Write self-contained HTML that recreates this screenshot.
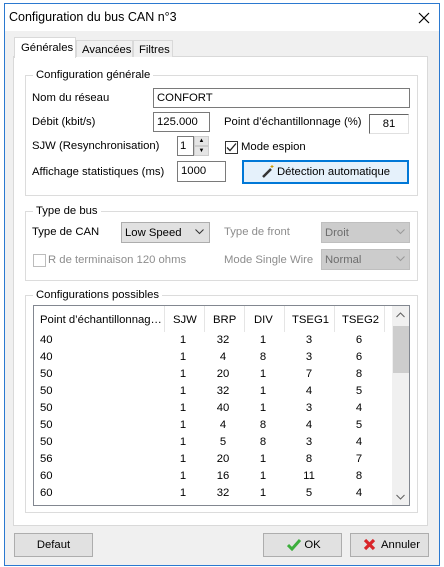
<!DOCTYPE html><html><head><meta charset="utf-8"><style>
*{box-sizing:border-box;margin:0;padding:0}
body{width:444px;height:567px;background:#fff;font-family:"Liberation Sans",sans-serif;font-size:11.3px;line-height:17px;color:#000;position:relative;overflow:hidden}
.a{position:absolute;white-space:nowrap}
.win{position:absolute;left:4px;top:3px;width:436px;height:563px;border:1px solid #2b79d0;background:#f0f0f0}
.tb{position:absolute;left:0;top:0;width:434px;height:27px;background:#fff}
.grp{position:absolute;border:1px solid #dcdcdc}
.lg{position:absolute;background:#fff;padding:0 3px;top:-8px;left:7px;line-height:15px}
.in{position:absolute;border:1px solid #7a7a7a;background:#fff;padding:2px 3px;line-height:15px}
.btn{position:absolute;border:1px solid #adadad;background:#e1e1e1;text-align:center;line-height:23px}
.sel{position:absolute;border:1px solid #adadad;background:#e1e1e1;padding-left:3px;line-height:20px}
.dis{background:#ccc;border-color:#bfbfbf;color:#6d6d6d}
.g{color:#8d8d8d}
.row{position:absolute;left:0;width:360px;height:17px;line-height:17px}
.row span{position:absolute;text-align:center;width:30px}
.row span:first-child{left:6px!important;text-align:left}
</style></head><body>
<div class="win">
<div class="tb"><div class="a" style="left:4px;top:5px;font-size:12.5px">Configuration du bus CAN n°3</div>
<svg class="a" style="left:413px;top:8px" width="12" height="12"><path d="M1 1L11 11M11 1L1 11" stroke="#000" stroke-width="1.2"/></svg></div>
</div>
<div class="a" style="left:13px;top:56px;width:415px;height:470px;background:#fff;border:1px solid #d9d9d9"></div>
<div class="a" style="left:14px;top:37px;width:62px;height:21px;background:#fff;border:1px solid #d9d9d9;border-bottom:none;padding:2px 0 0 6px">Générales</div>
<div class="a" style="left:76px;top:40px;width:57px;height:17px;background:#f0f0f0;border:1px solid #d9d9d9;border-bottom:none;padding:1px 0 0 5px">Avancées</div>
<div class="a" style="left:133px;top:40px;width:40px;height:17px;background:#f0f0f0;border:1px solid #d9d9d9;border-bottom:none;padding:1px 0 0 5px">Filtres</div>
<div class="grp" style="left:25px;top:75px;width:393px;height:121px"><div class="lg">Configuration générale</div></div>
<div class="a" style="left:32px;top:90px">Nom du réseau</div>
<div class="in" style="left:153px;top:88px;width:257px;height:20px">CONFORT</div>
<div class="a" style="left:32px;top:114px">Débit (kbit/s)</div>
<div class="in" style="left:153px;top:112px;width:57px;height:20px">125.000</div>
<div class="a" style="left:224px;top:114px">Point d’échantillonnage (%)</div>
<div class="in" style="left:369px;top:114px;width:40px;height:20px;border-color:#666 #e0e0e0 #e0e0e0 #666;text-align:center">81</div>
<div class="a" style="left:32px;top:138px">SJW (Resynchronisation)</div>
<div class="in" style="left:177px;top:136px;width:17px;height:20px;padding-left:2px">1</div>
<div class="a" style="left:194px;top:136px;width:15px;height:10px;background:#e5e5e5;border:1px solid #ccc;font-size:6px;text-align:center;line-height:8px">▲</div>
<div class="a" style="left:194px;top:146px;width:15px;height:10px;background:#e5e5e5;border:1px solid #ccc;font-size:6px;text-align:center;line-height:8px">▼</div>
<div class="a" style="left:225px;top:141px;width:13px;height:13px;border:1px solid #333;background:#fff"></div>
<svg class="a" style="left:226px;top:142px" width="11" height="11"><path d="M1 5.5L4 8.5L10 1.5" stroke="#222" stroke-width="1.3" fill="none"/></svg>
<div class="a" style="left:241px;top:139px">Mode espion</div>
<div class="a" style="left:32px;top:164px">Affichage statistiques (ms)</div>
<div class="in" style="left:177px;top:161px;width:49px;height:21px">1000</div>
<div class="btn" style="left:242px;top:160px;width:167px;height:24px;border:2px solid #0078d7;background:#e5f1fb;line-height:21px;padding-left:16px">Détection automatique</div>
<svg class="a" style="left:261px;top:164px" width="14" height="14"><path d="M2 13L10 5" stroke="#333" stroke-width="2.5"/><path d="M11 1v3M9.5 2.5h3" stroke="#c90" stroke-width="1"/></svg>
<div class="grp" style="left:25px;top:211px;width:393px;height:70px"><div class="lg">Type de bus</div></div>
<div class="a" style="left:32px;top:224px">Type de CAN</div>
<div class="sel" style="left:121px;top:222px;width:89px;height:21px">Low Speed</div>
<svg class="a" style="left:195px;top:229px" width="9" height="6"><path d="M0.5 0.5L4.5 4.5L8.5 0.5" stroke="#333" fill="none"/></svg>
<div class="a g" style="left:224px;top:224px">Type de front</div>
<div class="sel dis" style="left:321px;top:222px;width:89px;height:21px">Droit</div>
<svg class="a" style="left:396px;top:229px" width="9" height="6"><path d="M0.5 0.5L4.5 4.5L8.5 0.5" stroke="#999" fill="none"/></svg>
<div class="a" style="left:33px;top:254px;width:13px;height:13px;border:1px solid #bcbcbc;background:#fff"></div>
<div class="a g" style="left:48px;top:252px">R de terminaison 120 ohms</div>
<div class="a g" style="left:224px;top:252px">Mode Single Wire</div>
<div class="sel dis" style="left:321px;top:249px;width:89px;height:21px">Normal</div>
<svg class="a" style="left:396px;top:256px" width="9" height="6"><path d="M0.5 0.5L4.5 4.5L8.5 0.5" stroke="#999" fill="none"/></svg>
<div class="grp" style="left:25px;top:295px;width:393px;height:218px"><div class="lg">Configurations possibles</div></div>
<div class="a" style="left:33px;top:305px;width:377px;height:201px;border:1px solid #828790;background:#fff;overflow:hidden">
<div class="a" style="left:6px;top:6px">Point d’échantillonnag…</div>
<div class="a" style="left:130px;top:0;width:1px;height:26px;background:#e5e5e5"></div>
<div class="a" style="left:139px;top:6px">SJW</div>
<div class="a" style="left:170px;top:0;width:1px;height:26px;background:#e5e5e5"></div>
<div class="a" style="left:179px;top:6px">BRP</div>
<div class="a" style="left:210px;top:0;width:1px;height:26px;background:#e5e5e5"></div>
<div class="a" style="left:220px;top:6px">DIV</div>
<div class="a" style="left:250px;top:0;width:1px;height:26px;background:#e5e5e5"></div>
<div class="a" style="left:258px;top:6px">TSEG1</div>
<div class="a" style="left:300px;top:0;width:1px;height:26px;background:#e5e5e5"></div>
<div class="a" style="left:308px;top:6px">TSEG2</div>
<div class="a" style="left:350px;top:0;width:1px;height:26px;background:#e5e5e5"></div>
<div class="a" style="left:358px;top:0;width:18px;height:199px;background:#f0f0f0"></div>
<div class="a" style="left:359px;top:20px;width:16px;height:47px;background:#cdcdcd"></div>
<svg class="a" style="left:362px;top:6px" width="9" height="6"><path d="M0.5 5L4.5 1L8.5 5" stroke="#606060" fill="none"/></svg>
<svg class="a" style="left:362px;top:188px" width="9" height="6"><path d="M0.5 1L4.5 5L8.5 1" stroke="#606060" fill="none"/></svg>
<div class="row" style="top:26px"><span>40</span><span style="left:134px">1</span><span style="left:174px">32</span><span style="left:214px">1</span><span style="left:260px">3</span><span style="left:310px">6</span></div>
<div class="row" style="top:43px"><span>40</span><span style="left:134px">1</span><span style="left:174px">4</span><span style="left:214px">8</span><span style="left:260px">3</span><span style="left:310px">6</span></div>
<div class="row" style="top:60px"><span>50</span><span style="left:134px">1</span><span style="left:174px">20</span><span style="left:214px">1</span><span style="left:260px">7</span><span style="left:310px">8</span></div>
<div class="row" style="top:77px"><span>50</span><span style="left:134px">1</span><span style="left:174px">32</span><span style="left:214px">1</span><span style="left:260px">4</span><span style="left:310px">5</span></div>
<div class="row" style="top:94px"><span>50</span><span style="left:134px">1</span><span style="left:174px">40</span><span style="left:214px">1</span><span style="left:260px">3</span><span style="left:310px">4</span></div>
<div class="row" style="top:111px"><span>50</span><span style="left:134px">1</span><span style="left:174px">4</span><span style="left:214px">8</span><span style="left:260px">4</span><span style="left:310px">5</span></div>
<div class="row" style="top:128px"><span>50</span><span style="left:134px">1</span><span style="left:174px">5</span><span style="left:214px">8</span><span style="left:260px">3</span><span style="left:310px">4</span></div>
<div class="row" style="top:145px"><span>56</span><span style="left:134px">1</span><span style="left:174px">20</span><span style="left:214px">1</span><span style="left:260px">8</span><span style="left:310px">7</span></div>
<div class="row" style="top:162px"><span>60</span><span style="left:134px">1</span><span style="left:174px">16</span><span style="left:214px">1</span><span style="left:260px">11</span><span style="left:310px">8</span></div>
<div class="row" style="top:179px"><span>60</span><span style="left:134px">1</span><span style="left:174px">32</span><span style="left:214px">1</span><span style="left:260px">5</span><span style="left:310px">4</span></div>
</div>
<div class="btn" style="left:14px;top:533px;width:79px;height:24px">Defaut</div>
<div class="btn" style="left:263px;top:533px;width:79px;height:24px;padding-left:20px">OK</div>
<svg class="a" style="left:287px;top:539px" width="14" height="12"><path d="M1 6L5 10L13 1" stroke="#3cae3c" stroke-width="3" fill="none"/></svg>
<div class="btn" style="left:350px;top:533px;width:79px;height:24px;padding-left:22px">Annuler</div>
<svg class="a" style="left:363px;top:538px" width="13" height="13"><path d="M2 2L11 11M11 2L2 11" stroke="#d9262a" stroke-width="3.2"/></svg>
</body></html>
